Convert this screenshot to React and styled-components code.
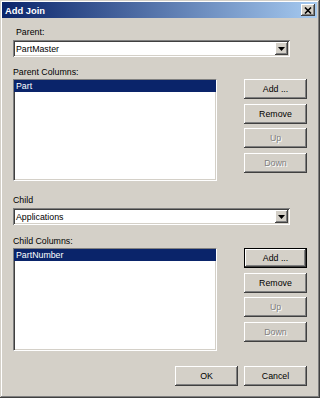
import styled, { createGlobalStyle, css } from "styled-components";

const GlobalStyle = createGlobalStyle`
  html, body {
    margin: 0;
    padding: 0;
    background: #d4d0c8;
  }
  body {
    font-family: "Liberation Sans", Arial, sans-serif;
    font-size: 8.8px;
    color: #000;
  }
`;

const raised = css`
  background: #d4d0c8;
  box-shadow: inset -1px -1px #404040, inset 1px 1px #ffffff,
    inset -2px -2px #808080, inset 2px 2px #d4d0c8;
`;

const sunken = css`
  background: #ffffff;
  box-shadow: inset 1px 1px #808080, inset -1px -1px #ffffff,
    inset 2px 2px #404040, inset -2px -2px #d4d0c8;
`;

const Window = styled.div`
  width: 320px;
  height: 398px;
  box-sizing: border-box;
  padding: 2px 3px 3px 2px;
  background: #d4d0c8;
  box-shadow: inset -1px -1px #404040, inset 1px 1px #d4d0c8,
    inset -2px -2px #808080, inset 2px 2px #ffffff;
  display: flex;
  flex-direction: column;
`;

const TitleBar = styled.div`
  height: 16px;
  display: flex;
  align-items: center;
  justify-content: space-between;
  padding: 0 2px 0 3px;
  background: linear-gradient(to right, #0a246a, #a6caf0);
`;

const Title = styled.span`
  color: #ffffff;
  font-weight: bold;
  font-size: 9.4px;
`;

const CloseButton = styled.div`
  ${raised};
  width: 14px;
  height: 12px;
  display: flex;
  align-items: center;
  justify-content: center;
`;

const Body = styled.div`
  padding: 0 10px 0 11px;
  display: flex;
  flex-direction: column;
`;

const Label = styled.div`
  height: 12px;
  line-height: 12px;
  margin-top: ${(p) => p.$top}px;
  padding-left: ${(p) => p.$indent || 0}px;
`;

const Combo = styled.div`
  ${sunken};
  width: 277px;
  height: 17px;
  margin-top: 2px;
  display: flex;
  align-items: center;
  justify-content: space-between;
`;

const ComboText = styled.span`
  padding-left: 3px;
`;

const DropButton = styled.div`
  ${raised};
  width: 13px;
  height: 13px;
  margin-right: 2px;
  display: flex;
  align-items: center;
  justify-content: center;
`;

const ListRow = styled.div`
  display: flex;
  justify-content: space-between;
  margin-top: 1px;
`;

const ListBox = styled.div`
  width: 204px;
  height: ${(p) => p.$height}px;
  box-sizing: border-box;
  background: #ffffff;
  border-top: 1px solid #808080;
  border-left: 1px solid #808080;
  border-bottom: 1px solid #ffffff;
  border-right: 1px solid #ffffff;
  box-shadow: inset 1px 1px #404040, inset -1px -1px #d4d0c8;
`;

const ListItem = styled.div`
  height: 12px;
  line-height: 12px;
  padding-left: 2px;
  background: ${(p) => (p.$selected ? "#0a246a" : "transparent")};
  color: ${(p) => (p.$selected ? "#ffffff" : "#000000")};
`;

const ButtonColumn = styled.div`
  width: 63px;
  display: flex;
  flex-direction: column;
  gap: 4.7px;
`;

const Button = styled.div`
  ${raised};
  width: 63px;
  height: 20px;
  box-sizing: border-box;
  display: flex;
  align-items: center;
  justify-content: center;
  color: ${(p) => (p.$disabled ? "#808080" : "#000000")};
  text-shadow: ${(p) => (p.$disabled ? "1px 1px #ffffff" : "none")};
  ${(p) =>
    p.$default &&
    css`
      box-shadow: inset 0 0 0 1px #000000, inset -2px -2px #404040,
        inset 2px 2px #ffffff, inset -3px -3px #808080;
    `}
`;

const Footer = styled.div`
  display: flex;
  justify-content: flex-end;
  gap: 6px;
  margin-top: 15px;
`;

function Arrow() {
  return (
    <svg width="7" height="4" viewBox="0 0 7 4">
      <polygon points="0,0 7,0 3.5,4" fill="#000" />
    </svg>
  );
}

function CloseGlyph() {
  return (
    <svg width="8" height="7" viewBox="0 0 8 7">
      <path d="M1 0.5 L7 6.5 M7 0.5 L1 6.5" stroke="#000" strokeWidth="1.6" />
    </svg>
  );
}

function ComboBox({ value }) {
  return (
    <Combo>
      <ComboText>{value}</ComboText>
      <DropButton>
        <Arrow />
      </DropButton>
    </Combo>
  );
}

function ColumnsEditor({ item, height, defaultAdd }) {
  return (
    <ListRow>
      <ListBox $height={height}>
        <ListItem $selected>{item}</ListItem>
      </ListBox>
      <ButtonColumn>
        <Button $default={defaultAdd}>Add ...</Button>
        <Button>Remove</Button>
        <Button $disabled>Up</Button>
        <Button $disabled>Down</Button>
      </ButtonColumn>
    </ListRow>
  );
}

export default function App() {
  return (
    <>
      <GlobalStyle />
      <Window>
        <TitleBar>
          <Title>Add Join</Title>
          <CloseButton>
            <CloseGlyph />
          </CloseButton>
        </TitleBar>
        <Body>
          <Label $top={8} $indent={3}>Parent:</Label>
          <ComboBox value="PartMaster" />
          <Label $top={9}>Parent Columns:</Label>
          <ColumnsEditor item="Part" height={102} />

          <Label $top={13}>Child</Label>
          <ComboBox value="Applications" />
          <Label $top={10}>Child Columns:</Label>
          <ColumnsEditor item="PartNumber" height={103} defaultAdd />

          <Footer>
            <Button>OK</Button>
            <Button>Cancel</Button>
          </Footer>
        </Body>
      </Window>
    </>
  );
}
